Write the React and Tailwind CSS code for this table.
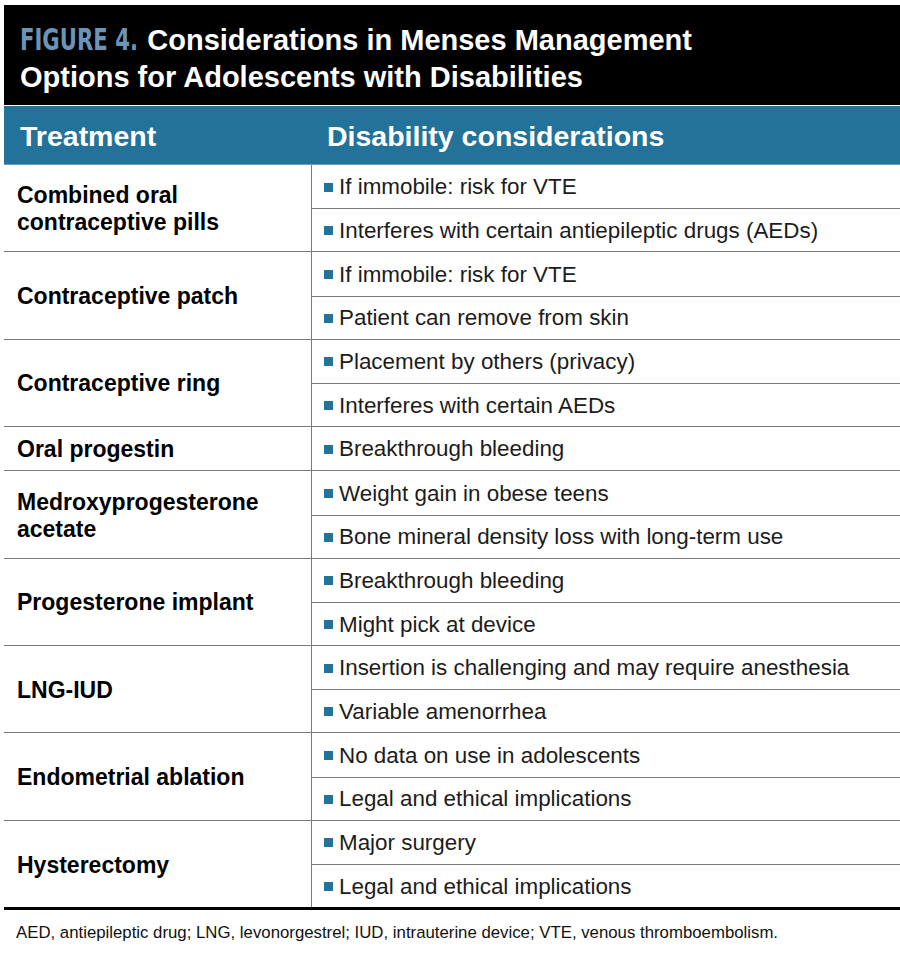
import React from 'react';

const rows = [
  { treatment: ['Combined oral', 'contraceptive pills'], items: ['If immobile: risk for VTE', 'Interferes with certain antiepileptic drugs (AEDs)'] },
  { treatment: ['Contraceptive patch'], items: ['If immobile: risk for VTE', 'Patient can remove from skin'] },
  { treatment: ['Contraceptive ring'], items: ['Placement by others (privacy)', 'Interferes with certain AEDs'] },
  { treatment: ['Oral progestin'], items: ['Breakthrough bleeding'] },
  { treatment: ['Medroxyprogesterone', 'acetate'], items: ['Weight gain in obese teens', 'Bone mineral density loss with long-term use'] },
  { treatment: ['Progesterone implant'], items: ['Breakthrough bleeding', 'Might pick at device'] },
  { treatment: ['LNG-IUD'], items: ['Insertion is challenging and may require anesthesia', 'Variable amenorrhea'] },
  { treatment: ['Endometrial ablation'], items: ['No data on use in adolescents', 'Legal and ethical implications'] },
  { treatment: ['Hysterectomy'], items: ['Major surgery', 'Legal and ethical implications'] }
];

const App = () => {
  return (
    <div className="w-[900px] h-[956px] bg-white pt-[5px] pl-[4px] font-['Liberation_Sans',Arial,sans-serif]">
      {/* Title */}
      <div className="h-[100px] bg-black pl-[16px] pt-[16px]">
        <div className="text-[29px] leading-[37px] font-bold text-white whitespace-nowrap">
          <span className="font-['DejaVu_Sans_Condensed','DejaVu_Sans',sans-serif] font-semibold text-[#6c93b8] text-[31px] inline-block scale-x-[0.76] origin-left mr-[-36px]">
            FIGURE 4.
          </span>{' '}
          Considerations in Menses Management
          <br />
          Options for Adolescents with Disabilities
        </div>
      </div>

      {/* Column header */}
      <div className="mt-px h-[59px] bg-[#22729a] border-b border-[#6d9cbc] flex items-center pt-[3px] text-white font-bold text-[28.5px]">
        <div className="w-[308px] pl-[16px]">Treatment</div>
        <div className="pl-[15px]">Disability considerations</div>
      </div>

      {/* Body */}
      <div>
        {rows.map((row, i) => (
          <div
            key={i}
            className={`flex ${i < rows.length - 1 ? 'border-b border-[#7a7a7a]' : ''}`}
          >
            <div className="w-[308px] shrink-0 border-r border-[#7a7a7a] flex flex-col justify-center pl-[13px] pt-[2px] text-[23px] leading-[27px] font-bold text-black">
              {row.treatment.map((t, j) => (
                <div key={j}>{t}</div>
              ))}
            </div>
            <div className="flex-1">
              {row.items.map((item, j) => (
                <div
                  key={j}
                  className={`h-[43.2px] flex items-center pl-[12px] pt-[1px] text-[22.4px] text-[#1c1c1c] whitespace-nowrap ${j > 0 ? 'border-t border-[#7a7a7a]' : ''}`}
                >
                  <span className="w-[9px] h-[9px] bg-[#22729a] mr-[6px] shrink-0" />
                  {item}
                </div>
              ))}
            </div>
          </div>
        ))}
      </div>

      <div className="h-[3px] bg-black" />

      <div className="pl-[12px] pt-[10px] text-[16.8px] text-[#111] whitespace-nowrap">
        AED, antiepileptic drug; LNG, levonorgestrel; IUD, intrauterine device; VTE, venous thromboembolism.
      </div>
    </div>
  );
};

export default App;
